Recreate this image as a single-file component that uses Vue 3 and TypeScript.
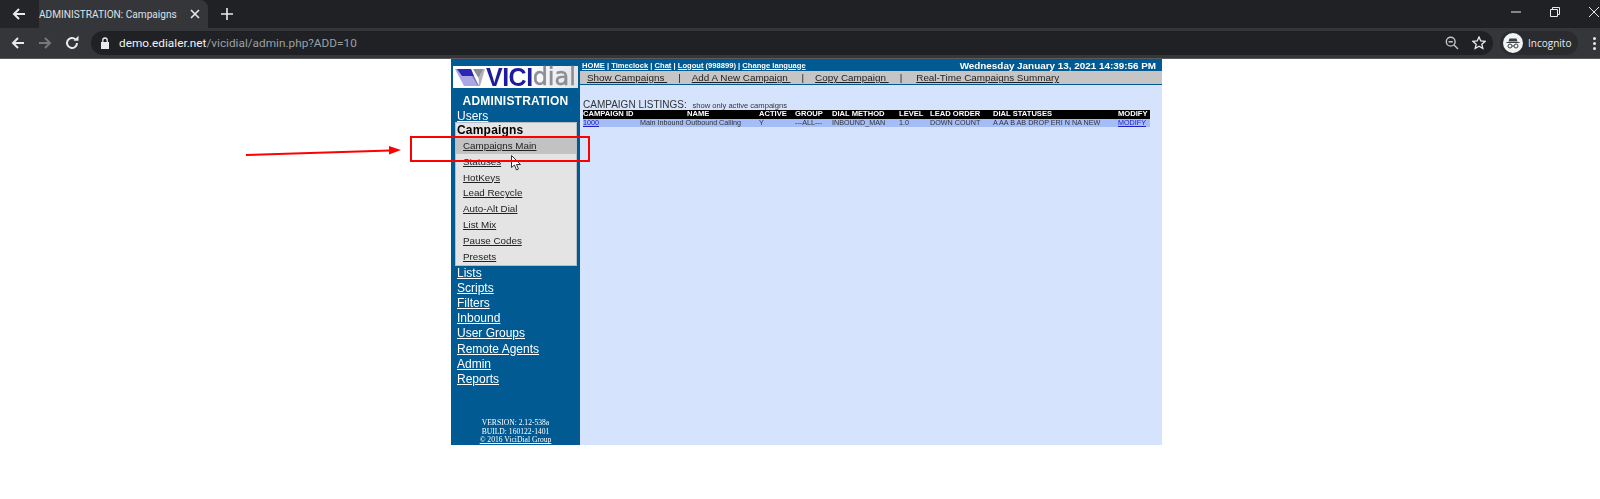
<template>
  <div class="screen">
    <div class="tabstrip">
      <div class="tab">
        <div class="tab-back">
          <svg width="16" height="16" viewBox="0 0 16 16"><path d="M14 8H3M8 3 3 8l5 5" fill="none" stroke="#e8eaed" stroke-width="2" /></svg>
        </div>
        <span class="tab-title">ADMINISTRATION: Campaigns</span>
        <svg class="tab-close" width="10" height="10" viewBox="0 0 10 10"><path d="M1 1l8 8M9 1 1 9" stroke="#e8eaed" stroke-width="1.6" /></svg>
      </div>
      <svg class="new-tab" width="12" height="12" viewBox="0 0 12 12"><path d="M6 0v12M0 6h12" stroke="#e8eaed" stroke-width="1.6" /></svg>
      <div class="win-btns">
        <svg width="10" height="10" viewBox="0 0 10 10"><path d="M0 5h10" stroke="#e8eaed" stroke-width="1" /></svg>
        <svg width="10" height="10" viewBox="0 0 10 10"><path d="M.5 2.500h7v7h-7zM2.500 2.500v-2h7v7h-2" fill="none" stroke="#e8eaed" stroke-width="1" /></svg>
        <svg width="10" height="10" viewBox="0 0 10 10"><path d="M0 0l10 10M10 0 0 10" stroke="#e8eaed" stroke-width="1" /></svg>
      </div>
    </div>

    <div class="toolbar">
      <svg class="tool-icon" width="16" height="16" viewBox="0 0 16 16"><path d="M14 8H3M8 3 3 8l5 5" fill="none" stroke="#e8eaed" stroke-width="2" /></svg>
      <svg class="tool-icon" width="16" height="16" viewBox="0 0 16 16"><path d="M2 8h11M8 3l5 5-5 5" fill="none" stroke="#77787b" stroke-width="2" /></svg>
      <svg class="tool-icon" width="16" height="16" viewBox="0 0 16 16"><path d="M13 8a5 5 0 1 1-1.500-3.600" fill="none" stroke="#e8eaed" stroke-width="2" /><path d="M9.500 5.800h5v-5z" fill="#e8eaed" /></svg>
      <div class="omnibox">
        <svg class="lock" width="10" height="12" viewBox="0 0 10 12"><path d="M1 5h8v7H1z" fill="#e8eaed" /><path d="M2.800 5V3.200a2.200 2.200 0 0 1 4.400 0V5" fill="none" stroke="#e8eaed" stroke-width="1.300" /></svg>
        <span class="host">demo.edialer.net</span><span class="path">/vicidial/admin.php?ADD=10</span>
        <div class="omni-right">
          <svg width="14" height="14" viewBox="0 0 14 14"><circle cx="5.700" cy="5.700" r="4.400" fill="none" stroke="#c4c5c7" stroke-width="1.400" /><path d="M3.600 5.700h4.200M9 9l4 4" stroke="#c4c5c7" stroke-width="1.400" /></svg>
          <svg width="14" height="14" viewBox="0 0 14 14"><path d="M7 1l1.800 4 4.200.4-3.200 2.800 1 4.300L7 10.200 3.200 12.500l1-4.300L1 5.400 5.200 5z" fill="none" stroke="#e8eaed" stroke-width="1.300" /></svg>
        </div>
      </div>
      <div class="profile">
        <svg width="20" height="20" viewBox="0 0 20 20"><circle cx="10" cy="10" r="10" fill="#f1f3f4" /><path d="M6.500 5.500h7l1 3h-9zM3.500 9h13v1h-13z" fill="#3c4043" /><circle cx="7" cy="13" r="2" fill="none" stroke="#3c4043" /><circle cx="13" cy="13" r="2" fill="none" stroke="#3c4043" /><path d="M9 13h2" stroke="#3c4043" /></svg>
        <span>Incognito</span>
      </div>
      <div class="kebab"><i></i><i></i><i></i></div>
    </div>

    <div class="page">
      <div class="app">
        <aside class="side">
          <div class="logo">
            <svg class="logo-mark" width="38" height="19" viewBox="0 0 36 19">
              <path d="M0 1h16l7 17H9z" fill="#a9a7e4" />
              <path d="M2 1h14l3 7H7z" fill="#2b26b4" />
              <path d="M18 1h11l-5.500 9z" fill="#8d8f96" />
              <path d="M19 8l5 10h-1L17 8z" fill="#6f6fc0" />
              <path d="M23.500 10 29 1l1 0-5 17h-1z" fill="#b0b2b8" />
            </svg>
            <span class="logo-vici">VICI</span><span class="logo-dial">dial</span>
          </div>
          <div class="side-title">ADMINISTRATION</div>
          <a class="side-link">Users</a>
          <div class="side-box">
            <div class="box-title">Campaigns</div>
            <a v-for="item in subItems" :key="item" class="box-item" :class="{ active: item === 'Campaigns Main' }">
              <span>{{ item }}</span>
            </a>
          </div>
          <a v-for="item in sideLinks" :key="item" class="side-link">{{ item }}</a>
          <div class="side-foot">
            VERSION: 2.12-538a<br />
            BUILD: 160122-1401<br />
            <u>© 2016 ViciDial Group</u>
          </div>
        </aside>

        <main class="main">
          <div class="topbar">
            <div class="top-links">
              <u>HOME</u> | <u>Timeclock</u> | <u>Chat</u> | <u>Logout</u> (998899) | <u>Change language</u>
            </div>
            <div class="top-date">Wednesday January 13, 2021 14:39:56 PM</div>
          </div>
          <div class="subnav">
            <u>Show Campaigns&nbsp;</u><span class="sep">|</span>
            <u>Add A New Campaign&nbsp;</u><span class="sep">|</span>
            <u>Copy Campaign&nbsp;</u><span class="sep">|</span>
            <u class="last">Real-Time Campaigns Summary</u>
          </div>
          <div class="content">
            <div class="list-head">CAMPAIGN LISTINGS: <span>show only active campaigns</span></div>
            <div class="grid grid-head">
              <span v-for="h in headers" :key="h">{{ h }}</span>
            </div>
            <div class="grid grid-row">
              <u class="blue">1000</u>
              <span class="right">Main Inbound Outbound Calling</span>
              <span>Y</span>
              <span>---ALL---</span>
              <span>INBOUND_MAN</span>
              <span>1.0</span>
              <span>DOWN COUNT</span>
              <span>A AA B AB DROP ERI N NA NEW</span>
              <u class="blue">MODIFY</u>
            </div>
          </div>
        </main>
      </div>

      <svg class="cursor" width="11" height="16" viewBox="0 0 11 16"><path d="M.5.500v12l3-2.500 2 5 2-1-2-4.500h4z" fill="#fff" stroke="#333" stroke-width="1" /></svg>
      <div class="callout"></div>
      <svg class="arrow" width="156" height="12" viewBox="0 0 156 12"><path d="M0 10 144 5.500" stroke="#f00" stroke-width="2" /><path d="M155 5 143 1v8.500z" fill="#f00" /></svg>
    </div>
  </div>
</template>

<script setup lang="ts">
const subItems: string[] = [
  'Campaigns Main',
  'Statuses',
  'HotKeys',
  'Lead Recycle',
  'Auto-Alt Dial',
  'List Mix',
  'Pause Codes',
  'Presets',
]
const sideLinks: string[] = ['Lists', 'Scripts', 'Filters', 'Inbound', 'User Groups', 'Remote Agents', 'Admin', 'Reports']
const headers: string[] = [
  'CAMPAIGN ID',
  'NAME',
  'ACTIVE',
  'GROUP',
  'DIAL METHOD',
  'LEVEL',
  'LEAD ORDER',
  'DIAL STATUSES',
  'MODIFY',
]
</script>

<style>
html,
body {
  background: #fff;
  overflow: hidden;
}
</style>

<style scoped>
.screen {
  width: 1600px;
  height: 499px;
  overflow: hidden;
  font-family: 'Liberation Sans', Arial, sans-serif;
  background: #fff;
}

.tabstrip {
  height: 28px;
  background: #202124;
  display: flex;
  align-items: center;
}

.tab {
  width: 208px;
  height: 28px;
  background: #35363a;
  border-radius: 0 8px 0 0;
  display: flex;
  align-items: center;
  color: #dfe1e5;
}

.tab-back {
  width: 39px;
  height: 28px;
  background: #242528;
  display: flex;
  align-items: center;
  justify-content: center;
  flex-shrink: 0;
  padding-right: 1px;
  box-sizing: border-box;
}

.tab-title {
  font-family: Roboto, sans-serif;
  font-size: 10.100px;
  white-space: nowrap;
  width: 151px;
  flex-shrink: 0;
}

.new-tab {
  margin-left: 13px;
}

.win-btns {
  margin-left: auto;
  display: flex;
  gap: 29px;
  padding-right: 1px;
  padding-bottom: 4px;
}

.toolbar {
  height: 31px;
  background: #35363a;
  display: flex;
  align-items: center;
  border-bottom: 1px solid #5a5b5e;
  box-sizing: border-box;
  padding-left: 10px;
}

.tool-icon {
  margin-right: 11px;
  flex-shrink: 0;
}

.omnibox {
  width: 1402px;
  height: 24px;
  border-radius: 12px;
  background: #202124;
  display: flex;
  align-items: center;
  font-family: Roboto, sans-serif;
  font-size: 11.800px;
  padding: 0 7px 0 9px;
  box-sizing: border-box;
  flex-shrink: 0;
}

.lock {
  margin-right: 9px;
}

.host {
  color: #f1f3f4;
}

.path {
  color: #9aa0a6;
}

.omni-right {
  margin-left: auto;
  display: flex;
  gap: 13px;
  align-items: center;
}

.profile {
  margin-left: 7px;
  width: 78px;
  height: 24px;
  border-radius: 12px;
  background: #2a2b2e;
  display: flex;
  align-items: center;
  gap: 5px;
  padding-left: 3px;
  box-sizing: border-box;
  color: #e8eaed;
  font-family: 'Open Sans', sans-serif;
  font-size: 10px;
  flex-shrink: 0;
}

.kebab {
  margin-left: 15px;
  display: flex;
  flex-direction: column;
  gap: 2px;
}

.kebab i {
  width: 3px;
  height: 3px;
  border-radius: 50%;
  background: #e8eaed;
}

.page {
  position: relative;
  height: 440px;
}

.app {
  width: 711px;
  height: 386px;
  margin-left: 451px;
  display: flex;
  filter: blur(0.3px);
}

.side {
  width: 129px;
  background: #015a92;
  flex-shrink: 0;
  color: #fff;
  padding: 0 0 0 6px;
  box-sizing: border-box;
  display: flex;
  flex-direction: column;
  position: relative;
}

.logo {
  margin: 7px 0 0 -4px;
  width: 125px;
  height: 22px;
  flex-shrink: 0;
  background: linear-gradient(100deg, #fff 60%, #dfe2e8);
  display: flex;
  align-items: center;
  box-sizing: border-box;
  padding-left: 1px;
  line-height: 22px;
  white-space: nowrap;
}

.logo-mark {
  flex-shrink: 0;
}

.logo-vici {
  font-size: 25px;
  font-weight: 700;
  color: #1e1c9e;
  letter-spacing: -0.5px;
  margin-left: -6px;
}

.logo-dial {
  font-family: 'DejaVu Sans', sans-serif;
  font-size: 24px;
  color: #8b8e94;
  -webkit-text-stroke: 0.5px #8b8e94;
}

.side-title {
  font-size: 12px;
  font-weight: 700;
  letter-spacing: 0.2px;
  text-align: center;
  margin-top: 6px;
  height: 15px;
  line-height: 15px;
  padding-right: 6px;
}

.side-link {
  color: #fff;
  text-decoration: underline;
  font-size: 12px;
  line-height: 15.100px;
  height: 15.100px;
  align-self: flex-start;
}

.side-box {
  width: 122px;
  height: 144px;
  margin: -2px 0 0 -2px;
  background: #e4e4e4;
  border: 1px solid #b8bcc4;
  box-sizing: border-box;
  color: #000;
  flex-shrink: 0;
}

.box-title {
  font-size: 12px;
  font-weight: 700;
  letter-spacing: 0.2px;
  height: 15px;
  line-height: 15px;
  padding-left: 1px;
}

.box-item {
  display: block;
  height: 15.800px;
  line-height: 15.800px;
  font-size: 9.800px;
  color: #222;
  padding-left: 7px;
}

.box-item span {
  text-decoration: underline;
}

.box-item.active {
  background: #c2c2c2;
}

.side-foot {
  position: absolute;
  left: 0;
  right: 0;
  bottom: 0;
  font-family: 'Liberation Serif', serif;
  font-size: 7.600px;
  line-height: 8.600px;
  text-align: center;
}

.main {
  flex: 1;
  background: #d6e3fc;
  display: flex;
  flex-direction: column;
}

.topbar {
  height: 12px;
  background: #015a92;
  color: #fff;
  display: flex;
  justify-content: space-between;
  align-items: center;
  padding: 0 6px 0 2px;
}

.top-links {
  font-size: 7.600px;
  font-weight: 700;
}

.top-date {
  font-size: 9.900px;
  font-weight: 700;
}

.subnav {
  height: 14px;
  background: #c5c5c5;
  border-bottom: 1px solid #015a92;
  box-sizing: border-box;
  font-size: 9.900px;
  line-height: 13px;
  color: #222;
  padding-left: 7px;
  white-space: pre;
}

.sep {
  margin: 0 11px;
}

.last {
  margin-left: 3px;
}

.content {
  padding: 14px 0 0 3px;
}

.list-head {
  font-size: 10px;
  color: #333;
  height: 11px;
  line-height: 11px;
}

.list-head span {
  font-size: 7.600px;
  margin-left: 3px;
}

.grid {
  display: grid;
  width: 567px;
  grid-template-columns: 104px 72px 36px 37px 67px 31px 63px 125px 1fr;
  height: 8.500px;
  line-height: 8.500px;
  font-size: 7.200px;
  white-space: nowrap;
}

.grid-head {
  background: #000;
  color: #fff;
  font-weight: 700;
  font-size: 7.600px;
}

.grid-row {
  background: #a5bdf6;
  color: #333;
}

.right {
  margin-left: -47px;
}

.blue {
  color: #2222c8;
}

.callout {
  position: absolute;
  left: 410px;
  top: 77px;
  width: 180px;
  height: 26px;
  border: 2px solid #f00;
  box-sizing: border-box;
}

.arrow {
  position: absolute;
  left: 246px;
  top: 86px;
}

.cursor {
  position: absolute;
  left: 511px;
  top: 96px;
}
</style>
